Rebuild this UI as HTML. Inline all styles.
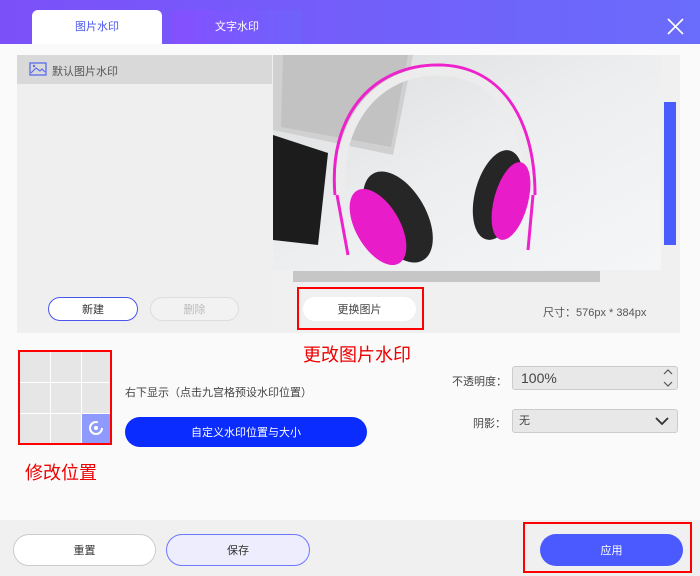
<!DOCTYPE html>
<html><head><meta charset="utf-8"><style>
*{margin:0;padding:0;box-sizing:border-box}
body{width:700px;height:576px;overflow:hidden;background:#fff;font-family:"Liberation Sans","Noto Sans CJK SC",sans-serif;font-size:11px;color:#333;position:relative}
.a{position:absolute}
.hdr{left:0;top:0;width:700px;height:44px;background:linear-gradient(90deg,#7c50f9,#6a6cfb)}
.tab{top:10px;height:34px;width:130px;text-align:center;line-height:34px;font-size:11px;border-radius:6px 6px 0 0}
.btn{border-radius:14px;font-size:11px;display:flex;align-items:center;justify-content:center}
.red{border:2px solid #f00}
.cell{position:absolute;width:30px;height:30px;background:#e6e6e6}
</style></head><body>
<div class="a hdr"></div>
<div class="a tab" style="left:32px;background:#fff;color:#4a55f0">图片水印</div>
<div class="a tab" style="left:172px;background:linear-gradient(90deg,#8450ff,#6f62fb);color:#fff">文字水印</div>
<svg class="a" style="left:667px;top:18px" width="17" height="17"><path d="M1 1L16 16M16 1L1 16" stroke="#fff" stroke-width="1.6"/></svg>
<div class="a" style="left:0;top:44px;width:700px;height:476px;background:#fafafa"></div>
<div class="a" style="left:17px;top:55px;width:255px;height:278px;background:#efefef"></div>
<div class="a" style="left:17px;top:55px;width:255px;height:29px;background:#d9d9d9"></div>
<svg class="a" style="left:29px;top:62px" width="18" height="14"><rect x="1" y="1" width="16" height="12" fill="none" stroke="#5a6cf0" stroke-width="1.3"/><path d="M2 11L7 6L11 9L13 7L16 10" fill="none" stroke="#5a6cf0" stroke-width="1.2"/><circle cx="5" cy="4" r="1.2" fill="#5a6cf0"/></svg>
<div class="a" style="left:52px;top:63px;color:#555">默认图片水印</div>
<div class="a btn" style="left:48px;top:297px;width:90px;height:24px;border:1.5px solid #4a55f0;background:#fff">新建</div>
<div class="a btn" style="left:150px;top:297px;width:89px;height:24px;border:1px solid #ddd;background:#f2f2f2;color:#bbb">删除</div>
<div class="a" style="left:272px;top:55px;width:408px;height:278px;background:#f0f0f0"></div>
<svg class="a" style="left:273px;top:55px" width="388" height="215" viewBox="0 0 388 215">
<defs><linearGradient id="g" x1="0" y1="0" x2="1" y2="1"><stop offset="0" stroke="none" stop-color="#dcdcdc"/><stop offset=".5" stop-color="#eceef0"/><stop offset="1" stop-color="#f5f6f8"/></linearGradient></defs>
<rect width="388" height="215" fill="url(#g)"/>
<path d="M0 0H140L120 100L0 75Z" fill="#d0d0d0"/>
<path d="M10 0H135L118 92L8 72Z" fill="#c2c2c2"/>
<path d="M0 80L55 98L45 190L0 185Z" fill="#1c1c1c"/>
<path d="M62 140C55 60 100 10 165 10C225 10 262 60 262 140" fill="none" stroke="#ee22cc" stroke-width="3"/>
<path d="M68 140C62 65 105 16 165 16C222 16 255 62 256 140" fill="none" stroke="#ececec" stroke-width="9"/>
<path d="M64 140L75 200M260 140L255 195" stroke="#ee22cc" stroke-width="3"/>
<ellipse cx="125" cy="162" rx="28" ry="50" transform="rotate(-30 125 162)" fill="#262626"/>
<ellipse cx="105" cy="172" rx="22" ry="42" transform="rotate(-30 105 172)" fill="#e81cc8"/>
<ellipse cx="225" cy="140" rx="23" ry="46" transform="rotate(15 225 140)" fill="#262626"/>
<ellipse cx="238" cy="146" rx="17" ry="40" transform="rotate(15 238 146)" fill="#e81cc8"/>
</svg>
<div class="a" style="left:664px;top:102px;width:12px;height:143px;background:#4b5cff"></div>
<div class="a" style="left:293px;top:271px;width:307px;height:11px;background:#c6c6c6"></div>
<div class="a red" style="left:297px;top:287px;width:127px;height:43px"></div>
<div class="a btn" style="left:303px;top:297px;width:113px;height:24px;background:#fff;color:#444">更换图片</div>
<div class="a" style="left:543px;top:304px;color:#555">尺寸：576px * 384px</div>
<div class="a" style="left:303px;top:341px;font-size:18px;color:#e00">更改图片水印</div>
<div class="a red" style="left:18px;top:350px;width:94px;height:95px;background:#fff"></div>
<div class="cell" style="left:20px;top:352px"></div><div class="cell" style="left:51px;top:352px"></div><div class="cell" style="left:82px;top:352px;width:28px"></div>
<div class="cell" style="left:20px;top:383px"></div><div class="cell" style="left:51px;top:383px"></div><div class="cell" style="left:82px;top:383px;width:28px"></div>
<div class="cell" style="left:20px;top:414px;height:29px"></div><div class="cell" style="left:51px;top:414px;height:29px"></div>
<div class="cell" style="left:82px;top:414px;width:28px;height:29px;background:#8f9aff"></div>
<svg class="a" style="left:88px;top:420px" width="16" height="16"><circle cx="8" cy="8" r="6" fill="none" stroke="#fff" stroke-width="2" stroke-dasharray="30 8"/><circle cx="8" cy="8" r="2" fill="#fff"/></svg>
<div class="a" style="left:25px;top:459px;font-size:18px;color:#e00">修改位置</div>
<div class="a" style="left:125px;top:384px;color:#444">右下显示（点击九宫格预设水印位置）</div>
<div class="a btn" style="left:125px;top:417px;width:242px;height:30px;background:#0a2cff;color:#fff;border-radius:15px">自定义水印位置与大小</div>
<div class="a" style="left:452px;top:373px;color:#444">不透明度：</div>
<div class="a" style="left:512px;top:366px;width:166px;height:24px;background:#e8e8e8;border:1px solid #ccc;border-radius:3px;font-size:14px;line-height:22px;padding-left:8px;color:#444">100%</div>
<svg class="a" style="left:662px;top:368px" width="12" height="20"><path d="M2 6L6 2L10 6M2 14L6 18L10 14" fill="none" stroke="#555" stroke-width="1.2"/></svg>
<div class="a" style="left:473px;top:415px;color:#444">阴影：</div>
<div class="a" style="left:512px;top:409px;width:166px;height:24px;background:#e8e8e8;border:1px solid #ccc;border-radius:3px;line-height:22px;padding-left:6px;color:#444">无</div>
<svg class="a" style="left:655px;top:416px" width="14" height="10"><path d="M1 2L7 8L13 2" fill="none" stroke="#333" stroke-width="1.8"/></svg>
<div class="a" style="left:0;top:520px;width:700px;height:56px;background:#f0f0f0"></div>
<div class="a btn" style="left:13px;top:534px;width:143px;height:32px;background:#fff;border:1px solid #ccc;border-radius:16px">重置</div>
<div class="a btn" style="left:166px;top:534px;width:144px;height:32px;background:#ededfd;border:1.5px solid #6b78ff;border-radius:16px">保存</div>
<div class="a red" style="left:523px;top:522px;width:169px;height:51px"></div>
<div class="a btn" style="left:540px;top:534px;width:143px;height:32px;background:#4a5aff;color:#fff;border-radius:16px">应用</div>
</body></html>
